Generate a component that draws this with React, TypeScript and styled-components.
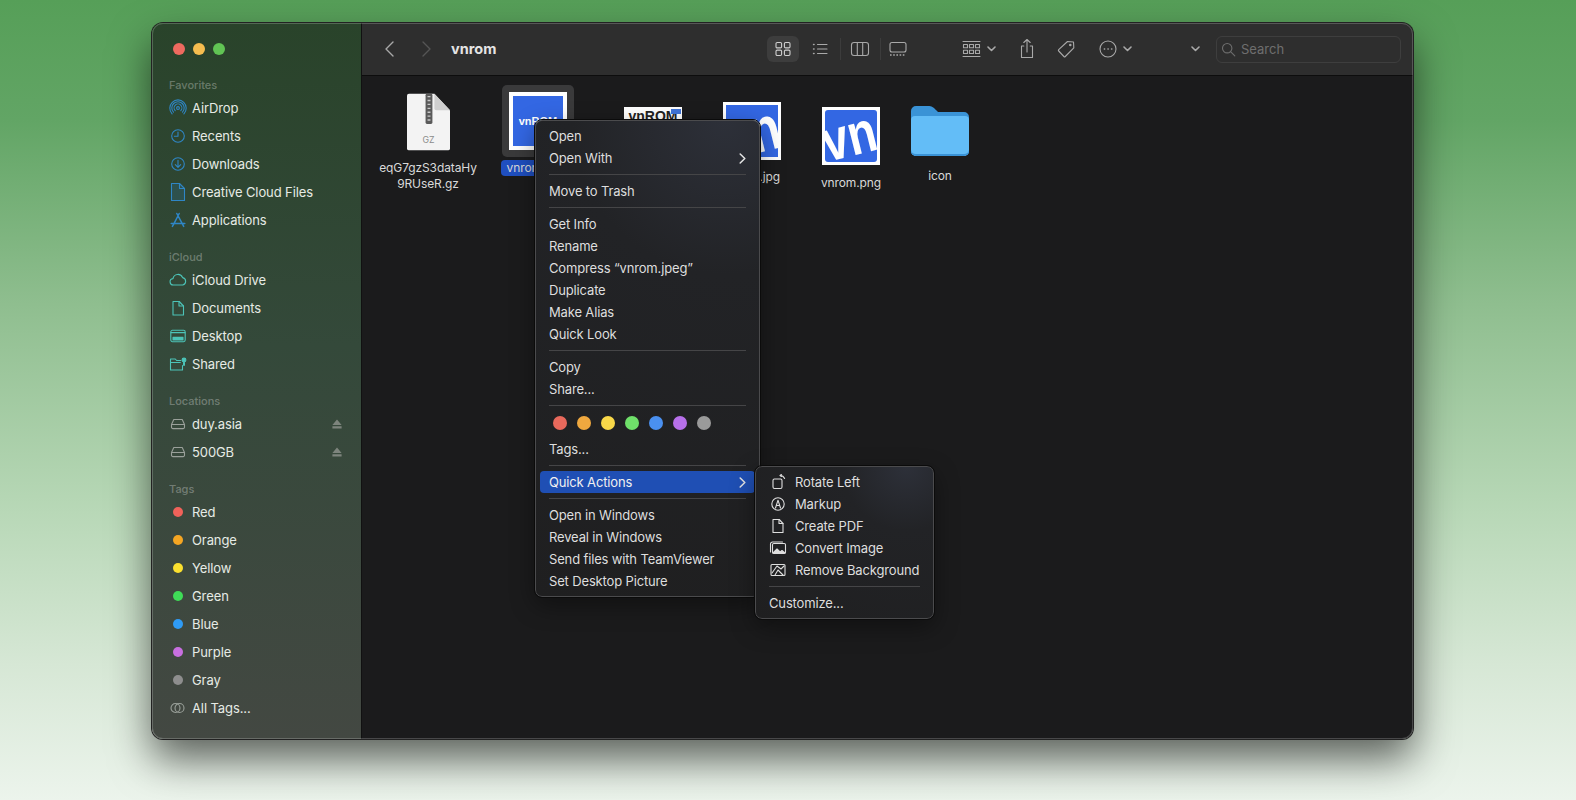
import React from 'react';
import styled, { createGlobalStyle } from 'styled-components';

const Global = createGlobalStyle`
  html, body { margin: 0; padding: 0; }
  body {
    font-family: Inter, "Liberation Sans", sans-serif;
    background: #fff;
    overflow: hidden;
  }
`;

const Page = styled.div`
  width: 1576px;
  height: 800px;
  box-sizing: border-box;
  padding: 23px 0 0 152px;
  background: linear-gradient(180deg, #569f58 0%, #62a565 15%, #8fbe8f 38%, #b8d8b7 64%, #d6e7d5 83%, #ecf4ec 100%);
`;

const Window = styled.div`
  position: relative;
  width: 1261px;
  height: 716px;
  display: flex;
  border-radius: 11px;
  box-shadow: 0 0 0 1px #222, 0 20px 42px rgba(0, 0, 0, 0.6);

  &::after {
    content: '';
    position: absolute;
    inset: 0;
    border: 1px solid rgba(255, 255, 255, 0.2);
    border-radius: 11px;
    pointer-events: none;
  }
`;

const Sidebar = styled.aside`
  width: 210px;
  flex: none;
  box-sizing: border-box;
  padding: 0 0 0 9px;
  border-radius: 11px 0 0 11px;
  background: linear-gradient(180deg, #29432a 0%, #34493a 45%, #434842 100%);
  border-right: 1px solid #111;
`;

const Lights = styled.div`
  display: flex;
  gap: 8px;
  padding: 20px 0 0 12px;
  height: 32px;
`;

const Light = styled.span<{ $c: string }>`
  width: 12px;
  height: 12px;
  border-radius: 50%;
  background: ${(p) => p.$c};
`;

const SideLabel = styled.div<{ $top: number }>`
  margin-top: ${(p) => p.$top}px;
  height: 16px;
  padding-left: 8px;
  font-size: 11px;
  line-height: 14px;
  font-weight: 500;
  color: rgba(255, 255, 255, 0.3);
`;

const SideRow = styled.div`
  height: 28px;
  display: flex;
  align-items: center;
  color: #e6ebe5;
  font-size: 13px;
  letter-spacing: -0.1px;
  padding-right: 19px;
`;

const SideIcon = styled.span`
  width: 31px;
  flex: none;
  padding-left: 8px;
  box-sizing: border-box;
  display: flex;
  align-items: center;
`;

const TagDot = styled.span<{ $c: string }>`
  width: 10px;
  height: 10px;
  border-radius: 50%;
  margin-left: 4px;
  background: ${(p) => p.$c};
`;

const Eject = styled.svg`
  margin-left: auto;
`;

const Main = styled.main`
  flex: 1;
  min-width: 0;
  display: flex;
  flex-direction: column;
  border-radius: 0 11px 11px 0;
  background: #1b1b1c;
`;

const Toolbar = styled.header`
  height: 53px;
  flex: none;
  box-sizing: border-box;
  display: flex;
  align-items: center;
  padding: 0 12px 0 9px;
  border-radius: 0 11px 0 0;
  background: #2e2e2e;
  border-bottom: 1px solid #0d0d0d;
  color: #a9a9a9;
`;

const ToolBtn = styled.div<{ $w: number; $ml?: number; $on?: boolean }>`
  width: ${(p) => p.$w}px;
  height: 26px;
  flex: none;
  margin-left: ${(p) => p.$ml ?? 0}px;
  display: flex;
  align-items: center;
  justify-content: center;
  gap: 6px;
  border-radius: 6px;
  background: ${(p) => (p.$on ? '#3d3d3d' : 'transparent')};
  color: ${(p) => (p.$on ? '#cfcfcf' : 'inherit')};
`;

const Title = styled.h1`
  margin: 0 0 2px 6px;
  font-size: 14.5px;
  font-weight: 700;
  color: #e4e4e4;
  width: 316px;
`;

const Divider = styled.span<{ $mr?: number }>`
  width: 1px;
  height: 22px;
  flex: none;
  background: #3c3c3c;
  margin: 0 ${(p) => p.$mr ?? 3}px 0 4px;
`;

const SearchBox = styled.div`
  width: 185px;
  height: 27px;
  flex: none;
  margin-left: 11px;
  box-sizing: border-box;
  display: flex;
  align-items: center;
  gap: 5px;
  padding-left: 4px;
  border: 1px solid #3e3e3e;
  border-radius: 6px;
  font-size: 13px;
  color: #6e6e6e;
`;

const FileArea = styled.section`
  flex: 1;
  display: flex;
  align-items: flex-start;
  padding: 9px 0 0 11px;
`;

const FileItem = styled.div<{ $w: number }>`
  width: ${(p) => p.$w}px;
  flex: none;
  display: flex;
  flex-direction: column;
  align-items: center;
`;

const Thumb = styled.div<{ $sel?: boolean; $mt: number; $h: number }>`
  width: 72px;
  height: ${(p) => p.$h}px;
  margin-top: ${(p) => p.$mt}px;
  display: flex;
  align-items: center;
  justify-content: center;
  border-radius: 5px;
  background: ${(p) => (p.$sel ? '#3a3a3b' : 'transparent')};
`;

const FileName = styled.div<{ $mt: number; $sel?: boolean }>`
  margin-top: ${(p) => p.$mt}px;
  max-width: 110px;
  text-align: center;
  font-size: 12px;
  line-height: 16px;
  color: #d9d9d9;
  letter-spacing: -0.1px;
  word-break: break-all;
  padding: ${(p) => (p.$sel ? '0 6px' : '0')};
  border-radius: 4px;
  background: ${(p) => (p.$sel ? '#1f4fc0' : 'transparent')};
`;

const Picture = styled.div<{ $b: number }>`
  width: 58px;
  height: 58px;
  box-sizing: border-box;
  padding: ${(p) => p.$b}px;
  background: #fff;
  display: flex;
`;

const PictureFill = styled.div<{ $bg: string; $r?: number }>`
  position: relative;
  flex: 1;
  overflow: hidden;
  display: flex;
  align-items: center;
  justify-content: center;
  background: ${(p) => p.$bg};
  border-radius: ${(p) => p.$r ?? 0}px;
`;

const WordMark = styled.span<{ $c: string; $s: number; $top?: boolean }>`
  font-family: "Liberation Sans", sans-serif;
  font-weight: 700;
  font-size: ${(p) => p.$s}px;
  line-height: 1;
  color: ${(p) => p.$c};
  align-self: ${(p) => (p.$top ? 'flex-start' : 'center')};
  margin-top: ${(p) => (p.$top ? '2px' : '0')};
`;

const LogoTag = styled.span`
  position: absolute;
  top: 2px;
  right: 1px;
  width: 10px;
  height: 5px;
  background: #3f74d8;
`;

const BigMark = styled.span<{ $s: number; $dx: number; $dy: number }>`
  font-family: "Liberation Sans", sans-serif;
  font-weight: 700;
  font-size: ${(p) => p.$s}px;
  line-height: 1;
  color: #fff;
  white-space: nowrap;
  transform: translate(${(p) => p.$dx}px, ${(p) => p.$dy}px) rotate(-14deg) scaleX(0.8);
`;

const Menu = styled.div<{ $x: number; $y: number; $w: number }>`
  position: absolute;
  left: ${(p) => p.$x}px;
  top: ${(p) => p.$y}px;
  width: ${(p) => p.$w}px;
  box-sizing: border-box;
  padding: 4px;
  border-radius: 7px;
  border: 1px solid #4b4b4d;
  outline: 1px solid #0b0b0b;
  background: radial-gradient(circle at 85% 0%, #2d3039 0%, #222326 30%, #1f1f20 100%);
  box-shadow: 0 8px 24px rgba(0, 0, 0, 0.4);
  color: #dedede;
  font-size: 13px;
  letter-spacing: -0.15px;
`;

const MenuRow = styled.div<{ $hi?: boolean; $pad?: number }>`
  height: 22px;
  display: flex;
  align-items: center;
  box-sizing: border-box;
  padding: 0 9px 0 ${(p) => p.$pad ?? 9}px;
  border-radius: 4px;
  white-space: nowrap;
  background: ${(p) => (p.$hi ? '#1f4fb4' : 'transparent')};
  color: ${(p) => (p.$hi ? '#f0f0f0' : 'inherit')};
`;

const MenuSep = styled.div`
  height: 1px;
  margin: 5px 9px;
  background: #454547;
`;

const Arrow = styled.svg`
  margin-left: auto;
`;

const ColorRow = styled.div`
  height: 27px;
  box-sizing: border-box;
  display: flex;
  align-items: center;
  gap: 10px;
  padding: 0 0 4px 13px;
`;

const ColorDot = styled.span<{ $c: string }>`
  width: 14px;
  height: 14px;
  border-radius: 50%;
  background: ${(p) => p.$c};
`;

const ActionIcon = styled.span`
  width: 20px;
  flex: none;
  display: flex;
  justify-content: center;
  margin-right: 7px;
`;

type IconProps = { children: React.ReactNode; c?: string; w?: number; h?: number };
const Ico = ({ children, c = 'currentColor', w = 18, h = 18 }: IconProps) => (
  <svg width={w} height={h} viewBox={`0 0 ${w} ${h}`} fill="none" stroke={c} strokeWidth="1.1" strokeLinecap="round" strokeLinejoin="round">
    {children}
  </svg>
);

const BLUE = '#2f86c5';
const TEAL = '#4cc4b8';
const GREY = '#9aa09a';

const favorites: [string, React.ReactNode][] = [
  ['AirDrop', <Ico c={BLUE}><circle cx="9" cy="9" r="1.4" /><path d="M6.2 11.6a3.9 3.9 0 1 1 5.6 0M4.5 13.2a6.2 6.2 0 1 1 9 0M3.1 14.8a8.2 8.2 0 1 1 11.8 0" /></Ico>],
  ['Recents', <Ico c={BLUE}><circle cx="9" cy="9" r="6.3" /><path d="M9 5v4.3H5.4" /></Ico>],
  ['Downloads', <Ico c={BLUE}><circle cx="9" cy="9" r="6.3" /><path d="M9 5.2v7M6.3 9.6 9 12.3l2.7-2.7" /></Ico>],
  ['Creative Cloud Files', <Ico c={BLUE} h={20}><path d="M2.5 1.5h8l5 5v12h-13z" fill="rgba(47,134,197,.18)" /><path d="M10.5 1.5v5h5" /></Ico>],
  ['Applications', <Ico c={BLUE}><path d="M10.2 2.5 4.6 13.4 3.4 15.4M7.8 2.5l6.9 12.9M2.2 12.4h13.6" strokeWidth="1.5" /></Ico>],
];

const icloud: [string, React.ReactNode][] = [
  ['iCloud Drive', <Ico c={TEAL}><path d="M4.6 14a3.2 3.2 0 0 1-.6-6.4 5 5 0 0 1 9.6-1 3.8 3.8 0 0 1 .2 7.4z" /></Ico>],
  ['Documents', <Ico c={TEAL}><path d="M4 2.5h6.2L14.5 7v9H4z" /><path d="M10 2.5V7h4.5" /></Ico>],
  ['Desktop', <Ico c={TEAL}><rect x="1.8" y="3.3" width="14.4" height="11.4" rx="1.6" /><path d="M2 5.6h14" /><rect x="4" y="10.4" width="10" height="2.6" fill={TEAL} /></Ico>],
  ['Shared', <Ico c={TEAL}><path d="M1.5 15V4h4.8l1.3 1.5h4.2M1.5 7.5h9.8M1.5 15h12v-4.5" /><circle cx="15" cy="5" r="1.9" fill={TEAL} /><path d="M15 7.5v2.5" strokeWidth="2" /></Ico>],
];

const Disk = () => (
  <Ico c={GREY}><path d="M4.8 4.5h8.4l2.3 5v2.7a1.4 1.4 0 0 1-1.4 1.4H3.9a1.4 1.4 0 0 1-1.4-1.4V9.5zM2.6 9.5h12.8" /></Ico>
);

const EjectIcon = () => (
  <Eject width="10" height="10" viewBox="0 0 10 10" fill="#7d847d"><path d="M5 .5 9.6 6H.4zM.4 7.2h9.2V9.4H.4z" /></Eject>
);

const tags: [string, string][] = [
  ['Red', '#f0625a'], ['Orange', '#f5a623'], ['Yellow', '#fbe02f'], ['Green', '#3fdc57'],
  ['Blue', '#2f9bf5'], ['Purple', '#c86fe0'], ['Gray', '#8e8e8e'],
];

const Chevron = ({ dir, c }: { dir: 'l' | 'r' | 'd'; c?: string }) => {
  if (dir === 'd') return <svg width="9" height="6" viewBox="0 0 9 6" fill="none" stroke={c ?? '#a9a9a9'} strokeWidth="1.6" strokeLinecap="round" strokeLinejoin="round"><path d="M1 1l3.5 3.5L8 1" /></svg>;
  return <svg width="9" height="16" viewBox="0 0 9 16" fill="none" stroke={c} strokeWidth="1.4" strokeLinecap="round" strokeLinejoin="round"><path d={dir === 'l' ? 'M8 1 1 8l7 7' : 'M1 1l7 7-7 7'} /></svg>;
};

const MenuArrow = () => (
  <Arrow width="7" height="11" viewBox="0 0 7 11" fill="none" stroke="#e4e4e4" strokeWidth="1.5" strokeLinecap="round" strokeLinejoin="round"><path d="M1.2 1 5.8 5.5 1.2 10" /></Arrow>
);

const menuColors = ['#e8695c', '#efa83f', '#f9d849', '#6fe06a', '#4a90f0', '#b770ea', '#9a9a9a'];

export default function App() {
  return (
    <Page>
      <Global />
      <Window>
        <Sidebar>
          <Lights>
            <Light $c="#ee6a5f" />
            <Light $c="#f5bd4f" />
            <Light $c="#61c454" />
          </Lights>
          <SideLabel $top={2.5}>Favorites</SideLabel>
          {favorites.map(([t, i]) => <SideRow key={t}><SideIcon>{i}</SideIcon>{t}</SideRow>)}
          <SideLabel $top={16.5}>iCloud</SideLabel>
          {icloud.map(([t, i]) => <SideRow key={t}><SideIcon>{i}</SideIcon>{t}</SideRow>)}
          <SideLabel $top={16}>Locations</SideLabel>
          <SideRow><SideIcon><Disk /></SideIcon>duy.asia<EjectIcon /></SideRow>
          <SideRow><SideIcon><Disk /></SideIcon>500GB<EjectIcon /></SideRow>
          <SideLabel $top={15.5}>Tags</SideLabel>
          {tags.map(([t, c]) => <SideRow key={t}><SideIcon><TagDot $c={c} /></SideIcon>{t}</SideRow>)}
          <SideRow>
            <SideIcon><Ico c={GREY} h={12}><circle cx="6.5" cy="6" r="4.5" /><circle cx="10.5" cy="6" r="4.5" /></Ico></SideIcon>
            All Tags...
          </SideRow>
        </Sidebar>
        <Main>
          <Toolbar>
            <ToolBtn $w={37}><Chevron dir="l" c="#a8a8a8" /></ToolBtn>
            <ToolBtn $w={37}><Chevron dir="r" c="#555" /></ToolBtn>
            <Title>vnrom</Title>
            <ToolBtn $w={32} $on>
              <Ico><rect x="2" y="2.5" width="5.6" height="5.4" rx="1.2" /><rect x="10.4" y="2.5" width="5.6" height="5.4" rx="1.2" /><rect x="2" y="10.1" width="5.6" height="5.4" rx="1.2" /><rect x="10.4" y="10.1" width="5.6" height="5.4" rx="1.2" /></Ico>
            </ToolBtn>
            <ToolBtn $w={32} $ml={5}>
              <Ico><path d="M6.5 4.5H16M6.5 9H16M6.5 13.5H16" /><path d="M2.6 4.5h.4M2.6 9h.4M2.6 13.5h.4" strokeWidth="1.6" /></Ico>
            </ToolBtn>
            <Divider />
            <ToolBtn $w={32}>
              <Ico w={20}><rect x="1.5" y="2.5" width="17" height="13" rx="2.5" /><path d="M7.3 2.5v13M12.7 2.5v13" /></Ico>
            </ToolBtn>
            <Divider $mr={1} />
            <ToolBtn $w={32}>
              <Ico w={20}><rect x="2" y="2.5" width="16" height="9.5" rx="2" /><path d="M2 15h16" strokeDasharray="1.6 1.6" strokeLinecap="butt" strokeWidth="1.6" /></Ico>
            </ToolBtn>
            <ToolBtn $w={44} $ml={43}>
              <Ico w={19}><path d="M1 1.5h17M1 16.5h17" /><rect x="1.5" y="4.5" width="4" height="3.2" /><rect x="7.5" y="4.5" width="4" height="3.2" /><rect x="13.5" y="4.5" width="4" height="3.2" /><rect x="1.5" y="10.3" width="4" height="3.2" /><rect x="7.5" y="10.3" width="4" height="3.2" /><rect x="13.5" y="10.3" width="4" height="3.2" /></Ico>
              <Chevron dir="d" />
            </ToolBtn>
            <ToolBtn $w={32} $ml={10}>
              <Ico h={22}><path d="M5.8 8H3.5v11.5h11V8h-2.3M9 14V1.5M5.8 4.5 9 1.5l3.2 3" /></Ico>
            </ToolBtn>
            <ToolBtn $w={32} $ml={7}>
              <Ico w={20} h={20}><path d="M11.5 2.5 17.5 3l.3 5.8-8.5 8.7a1 1 0 0 1-1.4 0L2.7 12a1 1 0 0 1 0-1.4z" /><circle cx="14.3" cy="6" r=".7" fill="currentColor" /></Ico>
            </ToolBtn>
            <ToolBtn $w={40} $ml={13}>
              <Ico><circle cx="9" cy="9" r="8" /><path d="M5.4 9h.2M9 9h.2M12.6 9h.2" strokeWidth="1.6" /></Ico>
              <Chevron dir="d" />
            </ToolBtn>
            <ToolBtn $w={20} $ml={50}><Chevron dir="d" /></ToolBtn>
            <SearchBox>
              <Ico w={15} h={15}><circle cx="6.2" cy="6.2" r="4.7" /><path d="m9.8 9.8 4 4" /></Ico>
              Search
            </SearchBox>
          </Toolbar>
          <FileArea>
            <FileItem $w={110}>
              <Thumb $mt={7} $h={60}>
                <svg width="43" height="58" viewBox="0 0 44 58" fill="none">
                  <path d="M2 0h26l16 17v39a2 2 0 0 1-2 2H2a2 2 0 0 1-2-2V2a2 2 0 0 1 2-2z" fill="#f3f3f3" />
                  <path d="M28 0l16 17H30a2 2 0 0 1-2-2z" fill="#cfcfcf" />
                  <rect x="19" y="0" width="7" height="31" rx="1.5" fill="#5a5a5a" />
                  <path d="M21 3h3M21 7h3M21 11h3M21 15h3M21 19h3M21 23h3M21 27h3" stroke="#c8c8c8" strokeWidth="1.4" />
                  <text x="22" y="51" textAnchor="middle" fontSize="9" fontFamily="Inter, sans-serif" fill="#8a8a8a">GZ</text>
                </svg>
              </Thumb>
              <FileName $mt={8}>eqG7gzS3dataHy<br />9RUseR.gz</FileName>
            </FileItem>
            <FileItem $w={110}>
              <Thumb $mt={0} $h={72} $sel>
                <Picture $b={4}><PictureFill $bg="#3367e3"><WordMark $c="#fff" $s={11}>vnROM</WordMark></PictureFill></Picture>
              </Thumb>
              <FileName $mt={3} $sel>vnrom.jpeg</FileName>
            </FileItem>
            <FileItem $w={120}>
              <Thumb $mt={22} $h={58}>
                <Picture $b={0}><PictureFill $bg="#fff"><WordMark $c="#222" $s={14} $top>vnROM</WordMark><LogoTag /></PictureFill></Picture>
              </Thumb>
            </FileItem>
            <FileItem $w={78}>
              <Thumb $mt={17} $h={58}>
                <Picture $b={3}><PictureFill $bg="#3367e3"><BigMark $s={62} $dx={-1} $dy={2}>vn</BigMark></PictureFill></Picture>
              </Thumb>
              <FileName $mt={9}>vnrom.jpg</FileName>
            </FileItem>
            <FileItem $w={120}>
              <Thumb $mt={22} $h={58}>
                <Picture $b={3}><PictureFill $bg="#3367e3" $r={3}><BigMark $s={58} $dx={-2} $dy={0}>vn</BigMark></PictureFill></Picture>
              </Thumb>
              <FileName $mt={10}>vnrom.png</FileName>
            </FileItem>
            <FileItem $w={58}>
              <Thumb $mt={19} $h={52}>
                <svg width="58" height="51" viewBox="0 0 58 51">
                  <path d="M0 6a5 5 0 0 1 5-5h12c4 0 5 1 8 4l2 2h26a5 5 0 0 1 5 5v34a5 5 0 0 1-5 5H5a5 5 0 0 1-5-5z" fill="#3a93d6" />
                  <path d="M0 15a4 4 0 0 1 4-4h50a4 4 0 0 1 4 4v31a5 5 0 0 1-5 5H5a5 5 0 0 1-5-5z" fill="#63bdf7" />
                  <path d="M0 46v-1a5 5 0 0 0 5 4h48a5 5 0 0 0 5-4v1a5 5 0 0 1-5 5H5a5 5 0 0 1-5-5z" fill="#3a93d6" />
                </svg>
              </Thumb>
              <FileName $mt={12}>icon</FileName>
            </FileItem>
          </FileArea>
        </Main>
        <Menu $x={383} $y={97} $w={225}>
          <MenuRow>Open</MenuRow>
          <MenuRow>Open With<MenuArrow /></MenuRow>
          <MenuSep />
          <MenuRow>Move to Trash</MenuRow>
          <MenuSep />
          <MenuRow>Get Info</MenuRow>
          <MenuRow>Rename</MenuRow>
          <MenuRow>Compress “vnrom.jpeg”</MenuRow>
          <MenuRow>Duplicate</MenuRow>
          <MenuRow>Make Alias</MenuRow>
          <MenuRow>Quick Look</MenuRow>
          <MenuSep />
          <MenuRow>Copy</MenuRow>
          <MenuRow>Share...</MenuRow>
          <MenuSep />
          <ColorRow>{menuColors.map((c) => <ColorDot key={c} $c={c} />)}</ColorRow>
          <MenuRow>Tags...</MenuRow>
          <MenuSep />
          <MenuRow $hi>Quick Actions<MenuArrow /></MenuRow>
          <MenuSep />
          <MenuRow>Open in Windows</MenuRow>
          <MenuRow>Reveal in Windows</MenuRow>
          <MenuRow>Send files with TeamViewer</MenuRow>
          <MenuRow>Set Desktop Picture</MenuRow>
        </Menu>
        <Menu $x={603} $y={443} $w={179}>
          <MenuRow $pad={8}><ActionIcon><Ico w={16} h={16}><rect x="3" y="5" width="9" height="9.5" rx="1.4" /><path d="M10 1.5c2.2 0 3.8 1 4.6 3M10 1.5l1.4-1M10 1.5l1.4 1" /></Ico></ActionIcon>Rotate Left</MenuRow>
          <MenuRow $pad={8}><ActionIcon><Ico w={16} h={16}><circle cx="8" cy="8" r="6.2" /><path d="M5.5 12 8 4.2 10.5 12M6.5 9.5h3" /></Ico></ActionIcon>Markup</MenuRow>
          <MenuRow $pad={8}><ActionIcon><Ico w={16} h={16}><path d="M3 1.5h6.2L13 5.5v9H3z" /><path d="M9 1.5v4h4" /></Ico></ActionIcon>Create PDF</MenuRow>
          <MenuRow $pad={8}><ActionIcon><Ico h={16}><rect x="3.5" y="3.5" width="13" height="10" rx="1.2" /><path d="M1.5 12V4a2 2 0 0 1 2-2h10" /><path d="M4 13l4-4 3 3 2-1.5 3 2.5z" fill="currentColor" /></Ico></ActionIcon>Convert Image</MenuRow>
          <MenuRow $pad={8}><ActionIcon><Ico h={16}><rect x="2" y="2.5" width="14" height="11" rx="1" /><path d="M3 11 8 4l4 3 3-3M6 13l3-5 5 5" /></Ico></ActionIcon>Remove Background</MenuRow>
          <MenuSep />
          <MenuRow>Customize...</MenuRow>
        </Menu>
      </Window>
    </Page>
  );
}
